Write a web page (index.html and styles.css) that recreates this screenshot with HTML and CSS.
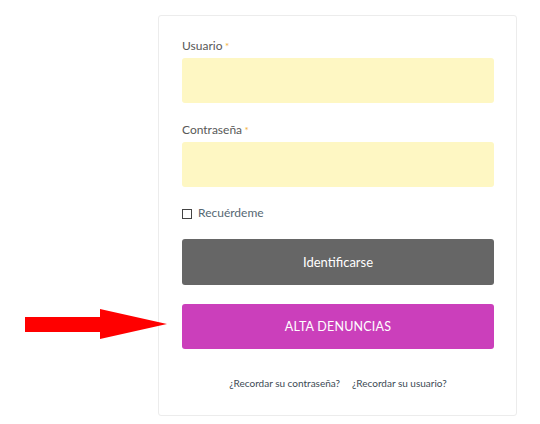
FILE: index.html
```html
<!DOCTYPE html>
<html lang="es">
<head>
<meta charset="utf-8">
<link rel="stylesheet" href="styles.css">
</head>
<body>
<svg class="arrow" width="150" height="34" viewBox="0 0 150 34" aria-hidden="true">
  <polygon points="0,8 75,8 75,0 142,15 75,30 75,23 0,23" fill="#ff0000"/>
</svg>
<div class="card">
  <form class="form">
    <div class="field">
      <label class="label">Usuario<span class="req"> *</span></label>
      <div class="input"></div>
    </div>
    <div class="field">
      <label class="label">Contraseña<span class="req"> *</span></label>
      <div class="input"></div>
    </div>
    <div class="remember">
      <span class="box"></span>
      <span class="remember-text">Recuérdeme</span>
    </div>
    <div class="btn btn-gray">Identificarse</div>
    <div class="btn btn-pink">ALTA DENUNCIAS</div>
    <div class="links">
      <a class="link">¿Recordar su contraseña?</a>
      <a class="link">¿Recordar su usuario?</a>
    </div>
  </form>
</div>
</body>
</html>
```
FILE: styles.css
```css
* { box-sizing: border-box; }
html, body { margin: 0; padding: 0; background: #fff; }
body {
  width: 540px;
  height: 424px;
  font-family: Lato, "Open Sans", sans-serif;
  position: relative;
  overflow: hidden;
}
.arrow {
  position: absolute;
  left: 25px;
  top: 309px;
}
.card {
  margin: 15px 0 0 158px;
  width: 359px;
  height: 401px;
  border: 1px solid #ececec;
  border-radius: 3px;
  padding: 22px 22px 0 23px;
}
.form { display: flex; flex-direction: column; }
.field { display: flex; flex-direction: column; }
.label {
  font-size: 12px;
  line-height: 16px;
  color: #585858;
  height: 20px;
}
.req { color: #f3b13a; font-size: 10px; }
.input {
  height: 45px;
  background: #fef7c3;
  border-radius: 3px;
}
.field + .field { margin-top: 19px; }
.remember {
  margin-top: 18px;
  display: flex;
  align-items: center;
  height: 14px;
}
.box {
  width: 10px;
  height: 10px;
  border: 1px solid #444;
  margin-top: 3px;
  margin-right: 6px;
}
.remember-text { font-size: 12px; color: #566873; }
.btn {
  height: 46px;
  border-radius: 3px;
  color: #fff;
  display: flex;
  align-items: center;
  justify-content: center;
}
.btn-gray {
  margin-top: 20px;
  background: #666666;
  font-size: 13px;
}
.btn-pink {
  margin-top: 19px;
  height: 45px;
  background: #cb3fbb;
  font-size: 12.5px;
  letter-spacing: 0.2px;
}
.links {
  margin-top: 28px;
  display: flex;
  justify-content: center;
  gap: 12px;
  font-size: 10px;
  color: #3c4a54;
}
.link { color: #3c4a54; text-decoration: none; }
```
